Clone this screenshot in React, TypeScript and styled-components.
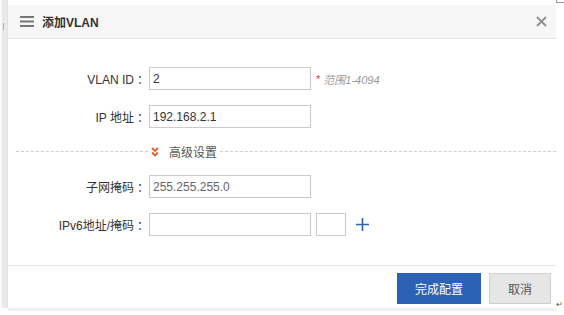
import React from "react";
import styled, { createGlobalStyle } from "styled-components";

const Global = createGlobalStyle`
  html, body { margin: 0; padding: 0; background: #fff; }
  body { font-family: "Liberation Sans", Arial, "Noto Sans CJK SC", sans-serif; color: #333; }
  * { box-sizing: border-box; }
`;

const Frame = styled.div`
  display: flex;
  width: 564px;
  height: 315px;
  overflow: hidden;
`;

const SideRail = styled.div`
  width: 8px;
  height: 308px;
  background: linear-gradient(to right, #fafafa 2px, #e6e8eb 2px, #e9ebee 7px, #dfe2e6 7px);
  position: relative;
`;

const RailMark = styled.span`
  position: absolute;
  left: 3px;
  top: 23px;
  width: 1px;
  height: 7px;
  background: #9fb3d6;
`;

const Column = styled.div`
  width: 548px;
  display: flex;
  flex-direction: column;
`;

const TopGap = styled.div`
  height: 5px;
`;

const Dialog = styled.div`
  height: 303px;
  display: flex;
  flex-direction: column;
  background: #fff;
`;

const BottomBar = styled.div`
  height: 3px;
  background: #edf1f7;
`;

const Gutter = styled.div`
  flex: 1;
  position: relative;
`;

const CornerMark = styled.span`
  position: absolute;
  left: 0;
  top: 0;
  width: 8px;
  height: 3px;
  border-left: 1px solid #9a9a9a;
  border-bottom: 1px solid #9a9a9a;
`;

const ReturnMark = styled.span`
  position: absolute;
  left: 0;
  top: 300px;
  font-size: 8px;
  line-height: 10px;
  color: #555;
`;

const Header = styled.div`
  height: 34px;
  background: #f7f7f7;
  border-bottom: 1px solid #e5e5e5;
  display: flex;
  align-items: center;
  padding: 0 9px 0 12px;
`;

const Title = styled.div`
  margin-left: 8px;
  font-size: 12px;
  font-weight: bold;
  color: #333;
  flex: 1;
`;

const IconBtn = styled.span`
  display: flex;
  align-items: center;
`;

const Body = styled.div`
  flex: 1;
  padding-top: 28px;
  display: flex;
  flex-direction: column;
`;

const Row = styled.div<{ $mt?: number }>`
  display: flex;
  align-items: center;
  height: 23px;
  margin-top: ${(p) => p.$mt ?? 0}px;
`;

const Label = styled.label`
  width: 141px;
  text-align: right;
  font-size: 12px;
  color: #333;
  white-space: nowrap;
`;

const Colon = styled.span`
  margin-left: 3px;
`;

const Input = styled.input<{ $w: number; $muted?: boolean; $ml?: number }>`
  width: ${(p) => p.$w}px;
  height: 23px;
  margin-left: ${(p) => p.$ml ?? 0}px;
  border: 1px solid #cacaca;
  padding: 0 4px 0 3px;
  font-family: inherit;
  font-size: 12px;
  color: ${(p) => (p.$muted ? "#666" : "#333")};
  outline: none;
  background: #fff;
`;

const Hint = styled.span`
  margin-left: 5px;
  font-size: 11px;
  font-style: italic;
  color: #999;
  display: flex;
  align-items: center;
  gap: 3px;
`;

const Star = styled.span`
  color: #e23c3c;
  font-style: normal;
`;

const Divider = styled.div`
  display: flex;
  align-items: center;
  height: 23px;
  margin: 12px 0;
  padding-left: 8px;
`;

const Dash = styled.div<{ $w?: number }>`
  ${(p) => (p.$w ? `width: ${p.$w}px;` : "flex: 1;")}
  border-top: 1px dashed #cfcfcf;
`;

const Toggle = styled.div`
  display: flex;
  align-items: center;
  padding: 0 3px;
  gap: 10px;
  font-size: 12px;
  color: #555;
`;

const Plus = styled.span`
  margin-left: 10px;
  display: flex;
  align-items: center;
`;

const Footer = styled.div`
  height: 43px;
  border-top: 1px solid #e5e5e5;
  display: flex;
  justify-content: flex-end;
  align-items: flex-start;
  padding: 7px 5px 0 0;
  gap: 8px;
`;

const Button = styled.button<{ $primary?: boolean }>`
  height: 31px;
  width: ${(p) => (p.$primary ? 84 : 62)}px;
  font-family: inherit;
  font-size: 12px;
  border: 1px solid ${(p) => (p.$primary ? "#2a5fae" : "#cfcfcf")};
  background: ${(p) => (p.$primary ? "#2b62b4" : "#e6e6e6")};
  color: ${(p) => (p.$primary ? "#fff" : "#555")};
  padding: 0;
  cursor: pointer;
`;

const Menu = () => (
  <svg width="14" height="11" viewBox="0 0 14 11">
    <rect x="0" y="0" width="14" height="2" fill="#777" />
    <rect x="0" y="4.5" width="14" height="2" fill="#777" />
    <rect x="0" y="9" width="14" height="2" fill="#777" />
  </svg>
);

const Close = () => (
  <svg width="11" height="11" viewBox="0 0 11 11">
    <path d="M1 1L10 10M10 1L1 10" stroke="#8f8f8f" strokeWidth="1.8" />
  </svg>
);

const Chevrons = () => (
  <svg width="8" height="10" viewBox="0 0 8 10">
    <path d="M1 1L4 4L7 1M1 5.5L4 8.5L7 5.5" stroke="#ec5a2d" strokeWidth="1.8" fill="none" />
  </svg>
);

const PlusIcon = () => (
  <svg width="13" height="13" viewBox="0 0 13 13">
    <path d="M6.5 0V13M0 6.5H13" stroke="#2b62b4" strokeWidth="1.6" />
  </svg>
);

const FieldLabel = ({ text }: { text: string }) => (
  <Label>
    {text}
    <Colon>：</Colon>
  </Label>
);

export default function App() {
  return (
    <>
      <Global />
      <Frame>
        <SideRail>
          <RailMark />
        </SideRail>
        <Column>
          <TopGap />
          <Dialog>
            <Header>
              <Menu />
              <Title>添加VLAN</Title>
              <IconBtn>
                <Close />
              </IconBtn>
            </Header>
            <Body>
              <Row>
                <FieldLabel text="VLAN ID" />
                <Input $w={162} value="2" readOnly />
                <Hint>
                  <Star>*</Star>范围1-4094
                </Hint>
              </Row>
              <Row $mt={15}>
                <FieldLabel text="IP 地址" />
                <Input $w={162} value="192.168.2.1" readOnly />
              </Row>
              <Divider>
                <Dash $w={132} />
                <Toggle>
                  <Chevrons />
                  高级设置
                </Toggle>
                <Dash />
              </Divider>
              <Row>
                <FieldLabel text="子网掩码" />
                <Input $w={162} $muted value="255.255.255.0" readOnly />
              </Row>
              <Row $mt={15}>
                <FieldLabel text="IPv6地址/掩码" />
                <Input $w={162} value="" readOnly />
                <Input $w={30} $ml={5} value="" readOnly />
                <Plus>
                  <PlusIcon />
                </Plus>
              </Row>
            </Body>
            <Footer>
              <Button $primary>完成配置</Button>
              <Button>取消</Button>
            </Footer>
          </Dialog>
          <BottomBar />
        </Column>
        <Gutter>
          <CornerMark />
          <ReturnMark>↵</ReturnMark>
        </Gutter>
      </Frame>
    </>
  );
}
